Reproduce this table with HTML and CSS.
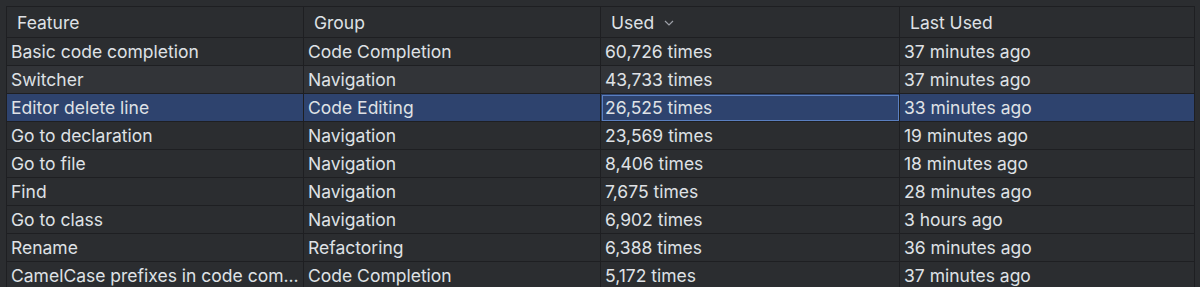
FILE: index.html
```html
<!DOCTYPE html>
<html lang="en">
<head>
<meta charset="utf-8">
<title>Feature usage statistics</title>
<link rel="stylesheet" href="styles.css">
</head>
<body>
<div class="panel">
  <table class="stats">
    <colgroup>
      <col class="c1"><col class="c2"><col class="c3"><col class="c4">
    </colgroup>
    <thead>
      <tr>
        <th>Feature</th>
        <th>Group</th>
        <th><span class="sort">Used<svg class="chev" width="10" height="6" viewBox="0 0 10 6"><path d="M1 1 L5 5 L9 1" fill="none" stroke="#9da0a8" stroke-width="1.2"/></svg></span></th>
        <th>Last Used</th>
      </tr>
    </thead>
    <tbody>
      <tr><td>Basic code completion</td><td>Code Completion</td><td>60,726 times</td><td>37 minutes ago</td></tr>
      <tr class="hover"><td>Switcher</td><td>Navigation</td><td>43,733 times</td><td>37 minutes ago</td></tr>
      <tr class="selected"><td>Editor delete line</td><td>Code Editing</td><td class="focus">26,525 times</td><td>33 minutes ago</td></tr>
      <tr><td>Go to declaration</td><td>Navigation</td><td>23,569 times</td><td>19 minutes ago</td></tr>
      <tr><td>Go to file</td><td>Navigation</td><td>8,406 times</td><td>18 minutes ago</td></tr>
      <tr><td>Find</td><td>Navigation</td><td>7,675 times</td><td>28 minutes ago</td></tr>
      <tr><td>Go to class</td><td>Navigation</td><td>6,902 times</td><td>3 hours ago</td></tr>
      <tr><td>Rename</td><td>Refactoring</td><td>6,388 times</td><td>36 minutes ago</td></tr>
      <tr><td>CamelCase prefixes in code com...</td><td>Code Completion</td><td>5,172 times</td><td>37 minutes ago</td></tr>
    </tbody>
  </table>
</div>
</body>
</html>
```
FILE: styles.css
```css
html, body {
  margin: 0;
  padding: 0;
  background: #2b2d30;
  height: 287px;
  overflow: hidden;
}
.panel {
  padding: 6px 6px 0 6px;
}
.stats {
  width: 1188px;
  table-layout: fixed;
  border-collapse: collapse;
  font-family: Inter, "Noto Sans", sans-serif;
  font-size: 17.5px;
  color: #dfe1e5;
  border: 1px solid #1e1f22;
}
.c1 { width: 297px; }
.c2 { width: 297px; }
.c3 { width: 299px; }
.c4 { width: 295px; }
.stats th {
  height: 31px;
  padding: 0 10px;
  text-align: left;
  font-weight: 400;
  border: 1px solid #1e1f22;
  border-top: none;
  box-sizing: border-box;
}
.stats td {
  height: 28px;
  padding: 0 4px;
  border: 1px solid #1e1f22;
  white-space: nowrap;
  overflow: hidden;
  box-sizing: border-box;
}
.sort {
  display: inline-flex;
  align-items: center;
  gap: 10px;
}
.chev {
  display: block;
  margin-top: 1px;
}
.hover td {
  background: #323438;
}
.selected td {
  background: #2e436e;
}
.selected td.focus {
  outline: 1px solid #5a7fc0;
  outline-offset: -2px;
}
```
